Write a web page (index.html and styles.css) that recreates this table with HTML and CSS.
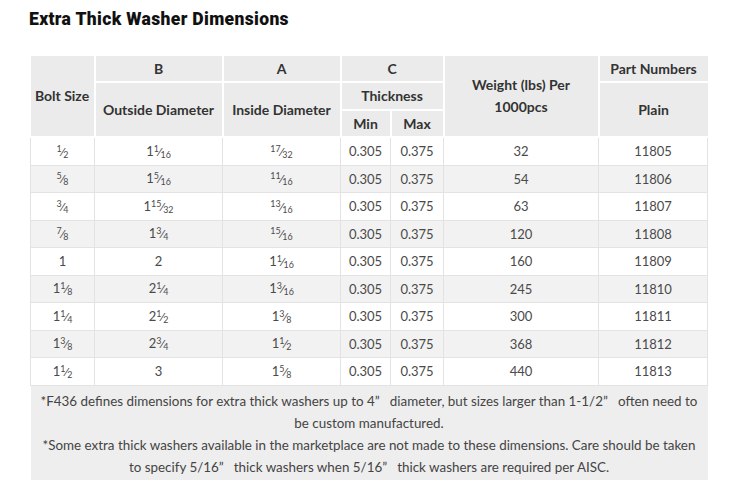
FILE: index.html
```html
<!DOCTYPE html>
<html>
<head>
<meta charset="utf-8">
<link rel="stylesheet" href="styles.css">
</head>
<body>
<div class="page">
  <h1 class="title">Extra Thick Washer Dimensions</h1>
  <table class="spec">
    <colgroup>
      <col class="c1"><col class="c2"><col class="c3"><col class="c4"><col class="c5"><col class="c6"><col class="c7">
    </colgroup>
    <thead>
      <tr class="h1">
        <th rowspan="3">Bolt Size</th>
        <th>B</th>
        <th>A</th>
        <th colspan="2">C</th>
        <th rowspan="3">Weight (lbs) Per<br>1000pcs</th>
        <th>Part Numbers</th>
      </tr>
      <tr class="h2">
        <th rowspan="2">Outside Diameter</th>
        <th rowspan="2">Inside Diameter</th>
        <th colspan="2">Thickness</th>
        <th rowspan="2">Plain</th>
      </tr>
      <tr class="h3">
        <th>Min</th>
        <th>Max</th>
      </tr>
    </thead>
    <tbody>
      <tr><td><span class="fr"><sup>1</sup>⁄<sub>2</sub></span></td><td>1<span class="fr"><sup>1</sup>⁄<sub>16</sub></span></td><td><span class="fr"><sup>17</sup>⁄<sub>32</sub></span></td><td>0.305</td><td>0.375</td><td>32</td><td>11805</td></tr>
      <tr><td><span class="fr"><sup>5</sup>⁄<sub>8</sub></span></td><td>1<span class="fr"><sup>5</sup>⁄<sub>16</sub></span></td><td><span class="fr"><sup>11</sup>⁄<sub>16</sub></span></td><td>0.305</td><td>0.375</td><td>54</td><td>11806</td></tr>
      <tr><td><span class="fr"><sup>3</sup>⁄<sub>4</sub></span></td><td>1<span class="fr"><sup>15</sup>⁄<sub>32</sub></span></td><td><span class="fr"><sup>13</sup>⁄<sub>16</sub></span></td><td>0.305</td><td>0.375</td><td>63</td><td>11807</td></tr>
      <tr><td><span class="fr"><sup>7</sup>⁄<sub>8</sub></span></td><td>1<span class="fr"><sup>3</sup>⁄<sub>4</sub></span></td><td><span class="fr"><sup>15</sup>⁄<sub>16</sub></span></td><td>0.305</td><td>0.375</td><td>120</td><td>11808</td></tr>
      <tr><td>1</td><td>2</td><td>1<span class="fr"><sup>1</sup>⁄<sub>16</sub></span></td><td>0.305</td><td>0.375</td><td>160</td><td>11809</td></tr>
      <tr><td>1<span class="fr"><sup>1</sup>⁄<sub>8</sub></span></td><td>2<span class="fr"><sup>1</sup>⁄<sub>4</sub></span></td><td>1<span class="fr"><sup>3</sup>⁄<sub>16</sub></span></td><td>0.305</td><td>0.375</td><td>245</td><td>11810</td></tr>
      <tr><td>1<span class="fr"><sup>1</sup>⁄<sub>4</sub></span></td><td>2<span class="fr"><sup>1</sup>⁄<sub>2</sub></span></td><td>1<span class="fr"><sup>3</sup>⁄<sub>8</sub></span></td><td>0.305</td><td>0.375</td><td>300</td><td>11811</td></tr>
      <tr><td>1<span class="fr"><sup>3</sup>⁄<sub>8</sub></span></td><td>2<span class="fr"><sup>3</sup>⁄<sub>4</sub></span></td><td>1<span class="fr"><sup>1</sup>⁄<sub>2</sub></span></td><td>0.305</td><td>0.375</td><td>368</td><td>11812</td></tr>
      <tr><td>1<span class="fr"><sup>1</sup>⁄<sub>2</sub></span></td><td>3</td><td>1<span class="fr"><sup>5</sup>⁄<sub>8</sub></span></td><td>0.305</td><td>0.375</td><td>440</td><td>11813</td></tr>
    </tbody>
    <tfoot>
      <tr>
        <td colspan="7" class="note">*F436 defines dimensions for extra thick washers up to 4”&nbsp;&nbsp; diameter, but sizes larger than 1-1/2”&nbsp;&nbsp; often need to be custom manufactured.<br>*Some extra thick washers available in the marketplace are not made to these dimensions. Care should be taken to specify 5/16”&nbsp;&nbsp; thick washers when 5/16”&nbsp;&nbsp; thick washers are required per AISC.</td>
      </tr>
    </tfoot>
  </table>
</div>
</body>
</html>
```

FILE: styles.css
```css
html, body {
  margin: 0;
  padding: 0;
  background: #ffffff;
}

.page {
  padding: 9px 0 0 29px;
  font-family: "Lato", "Liberation Sans", sans-serif;
}

.title {
  margin: 0 0 27px 0;
  font-family: "Roboto", "Liberation Sans", sans-serif;
  font-weight: 900;
  font-size: 17.5px;
  line-height: 20px;
  color: #111;
  letter-spacing: 0.35px;
}

.spec {
  margin-left: 1px;
  border-collapse: collapse;
  table-layout: fixed;
  width: 677px;
  font-size: 13px;
  color: #4a4a4a;
}

.c1 { width: 64px; }
.c2 { width: 128px; }
.c3 { width: 118px; }
.c4 { width: 50px; }
.c5 { width: 53px; }
.c6 { width: 155px; }
.c7 { width: 109px; }

.spec th {
  background: #ebebeb;
  border: 2px solid #ffffff;
  font-weight: 700;
  font-size: 14px;
  color: #333;
  padding: 0 2px;
  line-height: 22px;
  text-align: center;
  vertical-align: middle;
}

.spec thead tr:first-child th { border-top: 0; }
.spec th:first-child { border-left: 0; }
.spec th:last-child { border-right: 0; }

.h1 { height: 26px; }
.h2 { height: 28px; }
.h3 { height: 27px; }

.spec td {
  border: 1px solid #e3e3e3;
  text-align: center;
  vertical-align: middle;
  height: 26.5px;
  padding: 0;
  line-height: 16px;
}

.spec tbody tr:nth-child(even) td {
  background: #f2f2f2;
}

.fr {
  font-size: 0.95em;
}

.fr sup, .fr sub {
  font-size: 0.72em;
  line-height: 0;
}

.fr sup { vertical-align: 0.45em; }
.fr sub { vertical-align: -0.25em; }

.spec td.note {
  background: #eeeeee;
  border: 0;
  height: auto;
  padding: 4px 8px 2px;
  line-height: 22px;
  font-size: 13.4px;
  color: #444;
}
```
